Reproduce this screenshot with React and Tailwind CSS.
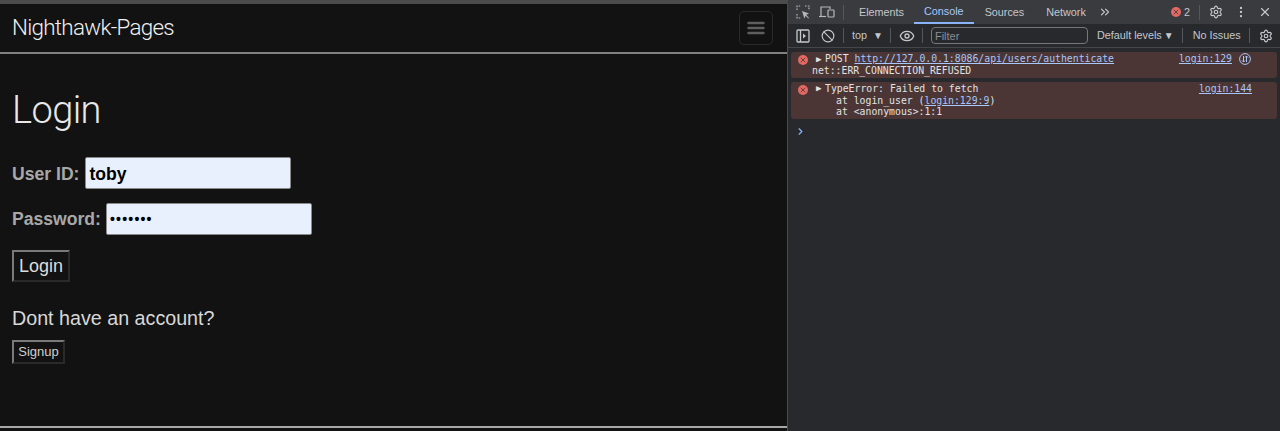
import React from 'react';
import { Settings, MoreVertical, X, Eye, Ban, ChevronsRight, ChevronRight } from 'lucide-react';

const sans = 'font-["Liberation_Sans",Arial,sans-serif]';

function InspectIcon() {
  return (
    <svg width="14" height="14" viewBox="0 0 14 14" fill="none" stroke="#b4b8be" strokeWidth="1.2">
      <path d="M1 5V1h4M9 1h4v4M1 9v4h4" strokeDasharray="1.6 1.2" />
      <path d="M6 6l7 2.6-2.8 1.2L13 13l-.6.6-2.8-2.8L8.4 13.4z" fill="#b4b8be" stroke="none" />
    </svg>
  );
}

function DeviceIcon() {
  return (
    <svg width="16" height="14" viewBox="0 0 16 14" fill="none" stroke="#b4b8be" strokeWidth="1.2">
      <path d="M2 11V2h9v2" />
      <path d="M0 11.5h7" />
      <rect x="9" y="5" width="6" height="7" rx="0.8" />
    </svg>
  );
}

function SidebarIcon() {
  return (
    <svg width="14" height="14" viewBox="0 0 14 14" fill="none" stroke="#c4c7cc" strokeWidth="1.3" className="ml-[8px]">
      <rect x="1" y="1" width="12" height="12" rx="1" />
      <path d="M4.5 1v12" />
      <path d="M7 4.5l3 2.5-3 2.5z" fill="#c4c7cc" stroke="none" />
    </svg>
  );
}

function NetworkIcon() {
  return (
    <svg width="12" height="12" viewBox="0 0 12 12" fill="none" stroke="#a8c7fa" strokeWidth="1">
      <circle cx="6" cy="6" r="5.4" />
      <path d="M4.5 3v6M3 7.5L4.5 9 6 7.5M7.5 9V3M6 4.5L7.5 3 9 4.5" />
    </svg>
  );
}

function HamburgerIcon() {
  return (
    <svg width="18" height="14" viewBox="0 0 18 14" fill="none" stroke="#5f5f5f" strokeWidth="2.4" strokeLinecap="round">
      <path d="M1.5 2h15M1.5 7h15M1.5 12h15" />
    </svg>
  );
}

function ErrorDot({ fg = 'text-[#4b3635]' }) {
  return (
    <span className="flex h-[10px] w-[10px] shrink-0 items-center justify-center rounded-full bg-[#e46962]">
      <X size={8} strokeWidth={2.5} className={fg} />
    </span>
  );
}

function Divider() {
  return <div className="h-[15px] w-px bg-[#55575c]" />;
}

function LeftPage() {
  return (
    <div className={`flex h-full w-[787px] shrink-0 flex-col bg-[#121212] ${sans}`}>
      <div className="h-[4px] bg-[#4b4b4b]" />
      <nav className="flex h-[50px] items-center justify-between border-b-2 border-[#808080] pl-3 pr-[14px]">
        <span className="font-['Roboto',sans-serif] text-[22.4px] font-light tracking-[-0.7px] text-[#f0f0f0]">Nighthawk-Pages</span>
        <button className="flex h-[34px] w-[34px] items-center justify-center rounded-[5px] border border-[#2a2a2a]">
          <HamburgerIcon />
        </button>
      </nav>

      <main className="flex-1 px-3">
        <h1 className="mt-[32px] font-['Roboto',sans-serif] text-[38px] font-light leading-[48px] tracking-[-0.6px] text-[#e8e8e8]">Login</h1>

        <div className="mt-[23px] flex h-[32px] items-center gap-[6px]">
          <label className="pt-[2px] text-[17.6px] font-bold text-[#a8a8a8]">User ID:</label>
          <input
            readOnly
            value="toby"
            className="h-[32px] w-[206px] rounded-[2px] border border-[#8a8a8a] bg-[#e8f0fe] px-[3px] pt-[2px] text-[17.6px] font-bold text-black"
          />
        </div>
        <div className="mt-[14px] flex h-[32px] items-center gap-[5px]">
          <label className="pt-[1px] text-[17.6px] font-bold text-[#a8a8a8]">Password:</label>
          <input
            readOnly
            type="password"
            value="1234567"
            className="h-[32px] w-[206px] rounded-[2px] border border-[#8a8a8a] bg-[#e8f0fe] px-[3px] text-[14px] font-bold tracking-[1.2px] text-black"
          />
        </div>

        <button className="mt-[15px] block h-[32px] w-[58px] border-2 border-t-[#7a7a7a] border-r-[#2a2a2a] border-b-[#2a2a2a] border-l-[#7a7a7a] text-[18px] text-[#dcdcdc]">
          Login
        </button>

        <p className="mt-[22px] text-[19.7px] leading-[28px] text-[#d8d8d8]">Dont have an account?</p>
        <button className="mt-[8px] block h-[24px] w-[53px] border-2 border-t-[#7a7a7a] border-r-[#2a2a2a] border-b-[#2a2a2a] border-l-[#7a7a7a] text-[13px] text-[#cfcfcf]">
          Signup
        </button>
      </main>

      <div className="mb-[3px] h-[2px] bg-[#a8a8a8]" />
    </div>
  );
}

function DevTools() {
  return (
    <div className={`flex h-full flex-1 flex-col border-l border-[#4a4b50] bg-[#28292d] ${sans}`}>
      <div className="flex h-[24px] items-center bg-[#3a3b3f] text-[10.8px] text-[#c4c7cc]">
        <div className="ml-[8px] flex items-center gap-[9px]">
          <InspectIcon />
          <DeviceIcon />
        </div>
        <div className="ml-[8px]"><Divider /></div>
        <span className="ml-[15px]">Elements</span>
        <span className="ml-[10px] flex h-[24px] items-center border-b-2 border-[#8ab4f8] px-[10px] text-[#a8c7fa]">Console</span>
        <span className="ml-[11px]">Sources</span>
        <span className="ml-[22px]">Network</span>
        <ChevronsRight size={14} className="ml-[12px]" />
        <div className="ml-auto flex items-center">
          <ErrorDot fg="text-[#3a3b3f]" />
          <span className="ml-[3px]">2</span>
          <div className="ml-[9px]"><Divider /></div>
          <Settings size={14} className="ml-[9px]" />
          <MoreVertical size={14} className="ml-[11px]" />
          <X size={14} className="mr-[8px] ml-[10px]" />
        </div>
      </div>

      <div className="flex h-[24px] items-center border-b border-[#45464a] text-[10.8px] text-[#c4c7cc]">
        <SidebarIcon />
        <Ban size={14} className="ml-[11px]" />
        <div className="ml-[8px]"><Divider /></div>
        <span className="ml-[8px]">top</span>
        <span className="ml-[6px] text-[10px]">▼</span>
        <div className="ml-[7px]"><Divider /></div>
        <Eye size={16} className="ml-[8px]" />
        <div className="ml-[7px]"><Divider /></div>
        <input
          readOnly
          placeholder="Filter"
          className="ml-[8px] h-[17px] w-[157px] rounded-[4px] border border-[#75777c] bg-transparent px-[3px] text-[11px] placeholder:text-[#8a8d92]"
        />
        <span className="ml-[9px]">Default levels</span>
        <span className="ml-[2px] text-[10px]">▼</span>
        <div className="ml-[8px]"><Divider /></div>
        <span className="ml-[10px]">No Issues</span>
        <div className="ml-[8px]"><Divider /></div>
        <Settings size={14} className="ml-[9px]" />
      </div>

      <div className="flex flex-1 flex-col gap-[4px] px-[3px] pt-[4px] font-['DejaVu_Sans_Mono',monospace] text-[9.8px] leading-[12px] text-[#e3e3e3]">
        <div className="relative h-[26px] rounded-[3px] bg-[#4b3635] pt-[1px] pr-[26px] pl-[21px]">
          <span className="absolute top-[3px] left-[7px]"><ErrorDot /></span>
          <div className="flex items-center">
            <span className="w-[13px] pl-[4px] text-[9px] leading-none">▶</span>
            <span>POST <span className="text-[#a8c7fa] underline">http://127.0.0.1:8086/api/users/authenticate</span></span>
            <span className="ml-auto text-[#a8c7fa] underline">login:129</span>
            <span className="ml-[7px]"><NetworkIcon /></span>
          </div>
          <div>net::ERR_CONNECTION_REFUSED</div>
        </div>
        <div className="relative h-[37px] rounded-[3px] bg-[#4b3635] pt-[1px] pr-[25px] pl-[21px] leading-[11.5px]">
          <span className="absolute top-[3px] left-[7px]"><ErrorDot /></span>
          <div className="flex items-center">
            <span className="w-[13px] pl-[4px] text-[9px] leading-none">▶</span>
            <span>TypeError: Failed to fetch</span>
            <span className="ml-auto text-[#a8c7fa] underline">login:144</span>
          </div>
          <div className="pl-[24px]">at login_user (<span className="text-[#a8c7fa] underline">login:129:9</span>)</div>
          <div className="pl-[24px]">at &lt;anonymous&gt;:1:1</div>
        </div>
        <ChevronRight size={11} strokeWidth={2.5} className="mt-[3px] ml-[4px] text-[#8ab4f8]" />
      </div>
    </div>
  );
}

export default function App() {
  return (
    <div className="flex h-[431px] w-[1280px] overflow-hidden">
      <LeftPage />
      <DevTools />
    </div>
  );
}
